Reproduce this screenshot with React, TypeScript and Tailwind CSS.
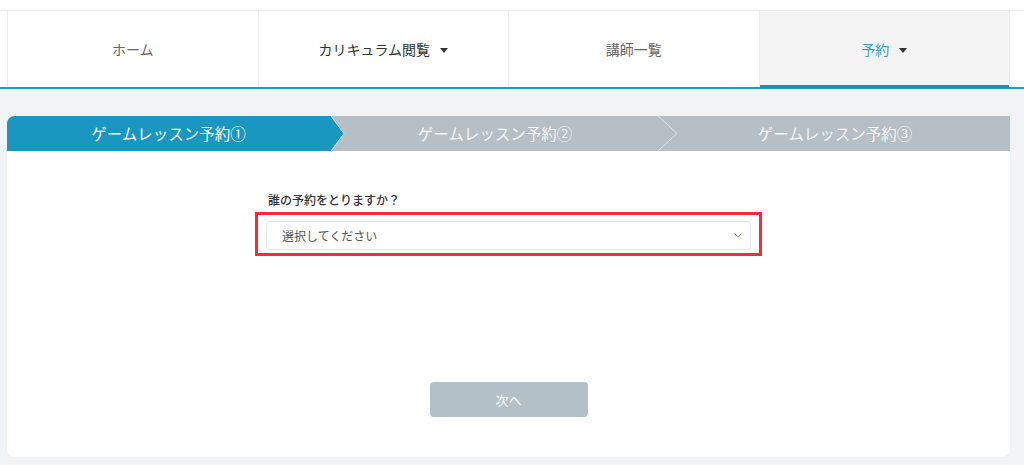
import React from "react";

const navItems = [
  { label: "ホーム", caret: false, active: false, dark: false },
  { label: "カリキュラム閲覧", caret: true, active: false, dark: true },
  { label: "講師一覧", caret: false, active: false, dark: false },
  { label: "予約", caret: true, active: true, dark: false },
];

const steps = [
  { label: "ゲームレッスン予約①", w: "w-[323px]" },
  { label: "ゲームレッスン予約②", w: "w-[330px]" },
  { label: "ゲームレッスン予約③", w: "flex-1" },
];

function Caret() {
  return (
    <svg width="8" height="5" viewBox="0 0 8 5" className="ml-[10px] mt-[2px]">
      <path d="M0 0 L8 0 L4 5 Z" fill="#333" />
    </svg>
  );
}

export default function App() {
  return (
    <main
      className="min-h-screen bg-[#f2f3f5] pb-[8px]"
      style={{ fontFamily: '"Noto Sans CJK JP", "Noto Sans", sans-serif' }}
    >
      {/* Header nav */}
      <header className="bg-white pt-[10px]">
        <div className="border-t border-[#ededed] border-b-2 border-b-[#1f9ac4]">
          <nav className="ml-[7px] w-[1003px] flex">
            {navItems.map((item, i) => (
              <div
                key={item.label}
                className={`relative flex-1 h-[76px] flex items-center justify-center border-l border-[#ededed] text-[14px] ${
                  i === navItems.length - 1 ? "border-r" : ""
                } ${item.active ? "bg-[#f4f4f4] text-[#2a9fcb]" : item.dark ? "text-[#333]" : "text-[#666]"}`}
              >
                <span>{item.label}</span>
                {item.caret && <Caret />}
                {item.active && (
                  <div className="absolute left-0 right-0 bottom-[-1px] h-[3px] bg-[#1590b9]" />
                )}
              </div>
            ))}
          </nav>
        </div>
      </header>

      {/* Steps */}
      <div className="ml-[7px] w-[1003px] mt-[27px]">
        <div className="relative flex h-[35px] rounded-tl-lg overflow-hidden bg-[#b6bfc5]">
          {steps.map((s, i) => (
            <div
              key={s.label}
              className={`${s.w} flex items-center justify-center text-[15.5px] ${
                i === 0 ? "bg-[#1a97c1] text-white" : "text-[#f4f6f7]"
              }`}
            >
              {s.label}
            </div>
          ))}
          {/* arrow after step 1 */}
          <svg
            className="absolute top-0 left-[322px]"
            width="24"
            height="35"
            viewBox="0 0 24 35"
          >
            <polygon points="0,0 2,0 15,17.5 2,35 0,35" fill="#1a97c1" />
            <polyline points="2,0 15,17.5 2,35" fill="none" stroke="#d9dee1" strokeWidth="1" />
          </svg>
          {/* separator after step 2 */}
          <svg
            className="absolute top-0 left-[651px]"
            width="24"
            height="35"
            viewBox="0 0 24 35"
          >
            <polyline points="0,0 19,17.5 0,35" fill="none" stroke="#dfe3e6" strokeWidth="1" />
          </svg>
        </div>

        {/* Card */}
        <section className="bg-white rounded-b-lg h-[306px] flex flex-col items-center">
          <div className="w-[481px] mt-[40px] text-[12px] text-[#333] font-medium">
            誰の予約をとりますか？
          </div>
          <div className="mt-[3px] w-[507px] h-[44px] border-[3px] border-[#ec2f38] px-[8px] pt-[6px]">
            <div className="h-[29px] border border-[#e3e6ea] rounded-[3px] flex items-center justify-between pl-[15px] pr-[8px] text-[12px] text-[#555]">
              <span>選択してください</span>
              <svg width="8" height="5" viewBox="0 0 8 5">
                <path d="M0.5 0.5 L4 4 L7.5 0.5" fill="none" stroke="#888" strokeWidth="1" />
              </svg>
            </div>
          </div>
          <button className="mt-[126px] w-[158px] h-[35px] rounded-[4px] bg-[#b3c0c7] text-white text-[13px]">
            次へ
          </button>
        </section>
      </div>
    </main>
  );
}
